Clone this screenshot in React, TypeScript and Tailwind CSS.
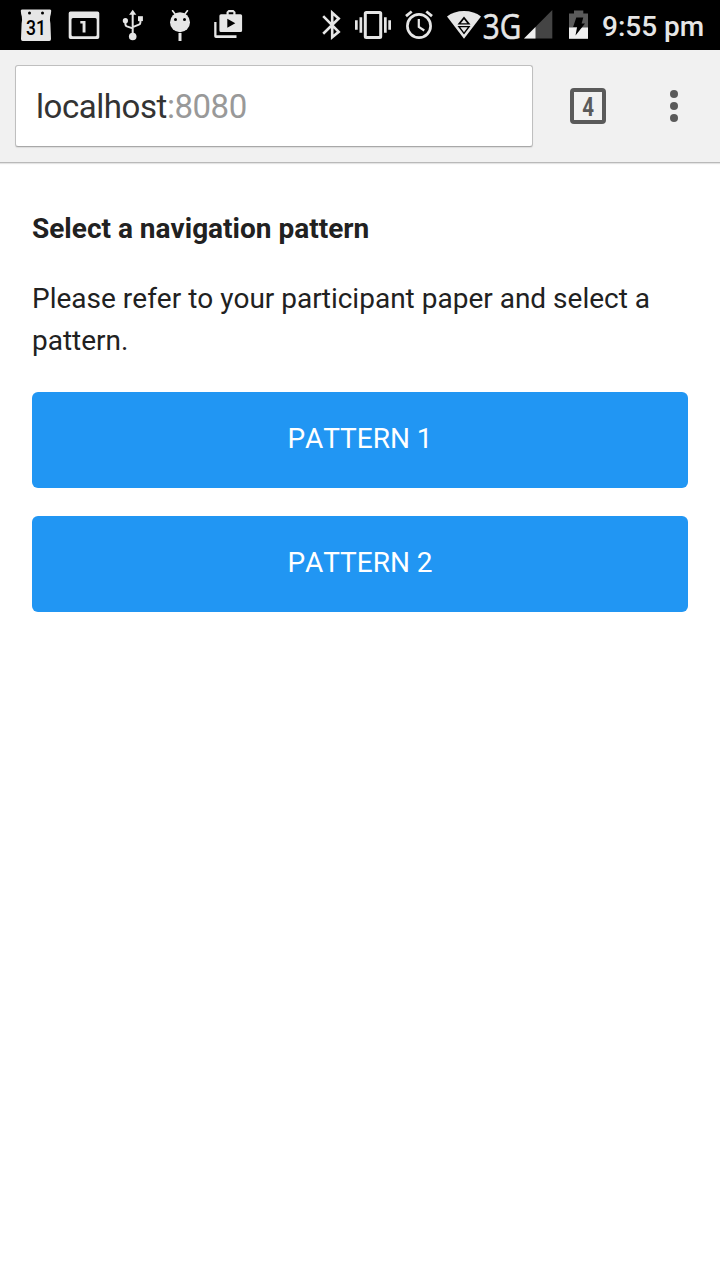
import React from "react";

const ROBOTO = "font-['Roboto','Liberation_Sans',sans-serif]";

function NotificationIcons() {
  return (
    <svg width="250" height="50" viewBox="0 0 250 50" fill="#e6e6e6" className="shrink-0">
      <path d="M22 9.500h28q1.500 0 1.200 1.500q-.2 3-1 5.500q-.6 3 .2 7l.6 15.500q0 2-1.700 2H22.700q-1.700 0-1.700-2l.6-15.500q.8-4 .2-7q-.8-2.500-1-5.500q-.3-1.500 1.200-1.500z" />
      <g fill="#000">
        <circle cx="29.500" cy="13" r="1.500" />
        <circle cx="42.500" cy="13" r="1.500" />
        <text x="36" y="34.500" fontSize="20" fontWeight="500" textAnchor="middle" textLength="20" lengthAdjust="spacingAndGlyphs">31</text>
      </g>
      <path fillRule="evenodd" d="M70.500 11.500h27q1.800 0 1.800 1.800v23.900q0 1.800-1.800 1.800h-27q-1.800 0-1.800-1.800V13.300q0-1.800 1.800-1.800zM73 18q-1.500 0-1.500 1.500v15.200q0 1.500 1.500 1.500h22.200q1.500 0 1.500-1.500V19.500q0-1.500-1.500-1.500z" />
      <path d="M80.300 21h5.200v11.500h-2.900v-9h-2.300z" />
      <g>
        <path d="M132.700 9.800l3.600 5h-7.200z" />
        <path d="M132.700 14v20M125.400 21v3.200q0 1.600 1.500 2.200l5.800 2M140.400 19v3.400q0 1.600-1.500 2.200l-6.200 2.600" fill="none" stroke="#e6e6e6" strokeWidth="2" />
        <circle cx="125.400" cy="20.700" r="2.600" />
        <rect x="138" y="16.200" width="4.900" height="4.900" />
        <circle cx="132.700" cy="36.500" r="3.800" />
      </g>
      <g>
        <circle cx="180" cy="22.200" r="10" />
        <path d="M172.600 10.800l3 4M187.400 10.800l-3 4" stroke="#e6e6e6" strokeWidth="1.700" strokeLinecap="round" />
        <circle cx="175.500" cy="19.500" r="1.500" fill="#000" />
        <circle cx="184.500" cy="19.500" r="1.500" fill="#000" />
        <rect x="178.500" y="33" width="3" height="8" />
      </g>
      <path fillRule="evenodd" d="M221 14.200h5.500v-2.200l2-2h5l2 2v2.200h5q1.600 0 1.600 1.600v14.700q0 1.600-1.600 1.600H221q-1.600 0-1.600-1.600V15.800q0-1.600 1.600-1.600zM228.700 14.200h4.600v-2h-4.600zM227.300 18.800v9l8-4.500z" />
      <path d="M214.200 22h2.300v13.300h20v2.700h-20.500q-1.800 0-1.800-1.800z" />
    </svg>
  );
}

function SystemIcons() {
  return (
    <svg width="280" height="50" viewBox="315 0 280 50" fill="#e6e6e6" className="shrink-0">
      <g fill="none" stroke="#e6e6e6">
        <path d="M323.200 16.200l15.500 15.600-6.500 5.500V12.700l6.500 5.800-15.500 15.300" strokeWidth="2.600" />
        <rect x="365.300" y="12.400" width="15.400" height="25" rx="1" strokeWidth="3" />
        <circle cx="419" cy="26" r="11.600" strokeWidth="2.700" />
        <path d="M406 16.200l5.700-4.700M426.300 11.500l5.700 4.700" strokeWidth="2.800" />
        <path d="M418.800 19v8l5.500 3.500" strokeWidth="2.200" />
      </g>
      <path d="M355 20.200h2.700v9.600H355zM359.500 17.300h2.700v15.400h-2.700zM384 17.300h2.700v15.400H384zM388.300 20.200h2.700v9.600h-2.700z" />
      <path d="M464 38.800L447 16.500Q454 11 464 11t17 5.500z" />
      <path fillRule="evenodd" d="M464 16.500l6.500 8h-13zM464 19.200l-3.200 4h6.400z" fill="#000" />
      <path fillRule="evenodd" d="M464 34.500l-6.500-8.500h13zM464 32.300l3.700-5h-7.400z" fill="#000" />
      <text x="482.800" y="38.500" fontSize="35.500" textLength="38.500" lengthAdjust="spacingAndGlyphs" stroke="#e6e6e6" strokeWidth=".6" className="font-['Open_Sans','Noto_Sans',sans-serif]">3G</text>
      <path d="M552.300 10v28.500H524z" fill="#444" />
      <path d="M535.500 27v11.500H524z" fill="#f0f0f0" />
      <path d="M569 13.500h5v-3h9.300v3h4.700V28h-19z" fill="#5a5a5a" />
      <path d="M569 27.500h19v11.300h-19z" fill="#f0f0f0" />
      <path d="M576.300 17.500h7l-1.700 6h3.400l-9.500 12 1.600-8.500h-4z" fill="#000" />
    </svg>
  );
}

function StatusBar() {
  return (
    <header className="flex h-[50px] items-center bg-black text-[#e6e6e6]">
      <NotificationIcons />
      <div className="grow" />
      <SystemIcons />
      <div className="w-[125px] shrink-0 whitespace-nowrap pl-[7px] pt-[3px] text-[28px] font-medium leading-8">9:55 pm</div>
    </header>
  );
}

function BrowserBar() {
  return (
    <div className="flex h-[113px] items-start border-b border-[#b9b9b9] bg-[#f1f1f1] pl-[15px] pt-[15px] shadow-[0_1px_1px_#e4e4e4]">
      <div className="flex h-[82px] w-[518px] items-center rounded-[3px] border border-[#bfbfbf] border-b-[#a8a8a8] bg-white pl-5 pt-[2px] text-[33px] leading-10 tracking-[-0.45px] text-[#333] shadow-[0_1px_1px_#dcdcdc]">
        <span>localhost</span>
        <span className="text-[#999]">:8080</span>
      </div>
      <div className="ml-[37px] mt-[23px] flex size-9 items-center justify-center rounded-[4px] border-4 border-[#5a5a5a] text-[#5a5a5a]">
        <span className="scale-x-[.82] pt-[2px] text-[25px] font-bold leading-none">4</span>
      </div>
      <div className="ml-16 mt-[25px] flex flex-col gap-1">
        <i className="size-2 rounded-full bg-[#5a5a5a]" />
        <i className="size-2 rounded-full bg-[#5a5a5a]" />
        <i className="size-2 rounded-full bg-[#5a5a5a]" />
      </div>
    </div>
  );
}

function PatternButton({ children }: { children: React.ReactNode }) {
  return (
    <button className="flex h-24 w-full items-center justify-center rounded-[6px] bg-[#2196f3] pb-[2px] text-[28px] leading-[42px] text-white">
      {children}
    </button>
  );
}

export default function App() {
  return (
    <div className={`${ROBOTO} flex min-h-screen flex-col bg-white text-[#212121]`}>
      <StatusBar />
      <BrowserBar />
      <main className="px-8 pt-[45px] [font-kerning:none]">
        <h1 className="text-[28px] font-bold leading-[42px]">Select a navigation pattern</h1>
        <p className="mt-7 text-[28px] leading-[42px]">Please refer to your participant paper and select a pattern.</p>
        <div className="mt-[30px] flex flex-col gap-7">
          <PatternButton>PATTERN 1</PatternButton>
          <PatternButton>PATTERN 2</PatternButton>
        </div>
      </main>
    </div>
  );
}
